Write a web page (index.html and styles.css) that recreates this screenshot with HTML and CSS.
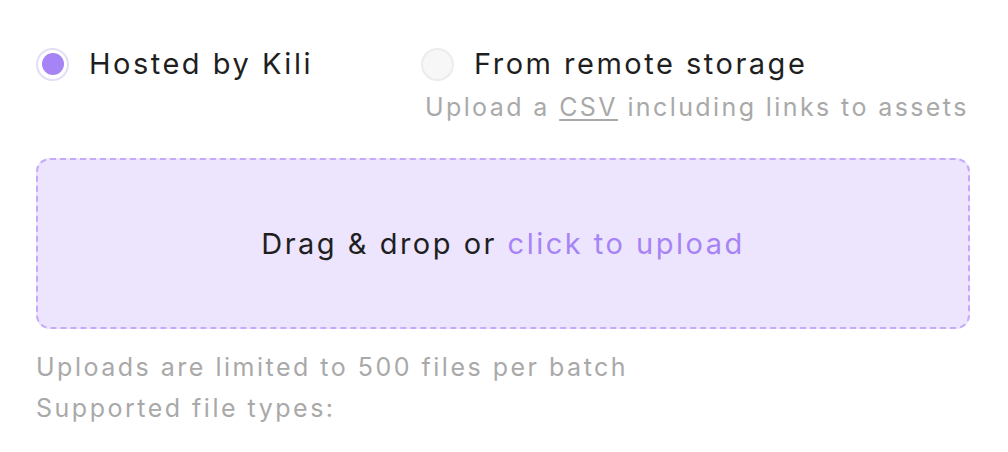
FILE: index.html
```html
<!DOCTYPE html>
<html lang="en">

<head>
    <meta charset="UTF-8" />
    <title>Upload assets</title>
    <link rel="stylesheet" href="styles.css">
</head>

<body>

    <div class="upload-panel">

        <!-- Source choice -->
        <div class="source-options">
            <label class="source-option">
                <span class="radio radio-checked"></span>
                <span class="option-label">Hosted by Kili</span>
            </label>

            <div class="source-column">
                <label class="source-option">
                    <span class="radio"></span>
                    <span class="option-label">From remote storage</span>
                </label>
                <div class="option-hint">Upload a <u>CSV</u> including links to assets</div>
            </div>
        </div>

        <!-- Drop zone -->
        <div class="dropzone">
            <span>Drag &amp; drop or <span class="upload-link">click to upload</span></span>
        </div>

        <!-- Limits -->
        <div class="upload-notes">
            <div>Uploads are limited to 500 files per batch</div>
            <div>Supported file types:</div>
        </div>

    </div>

</body>

</html>
```

FILE: styles.css
```css
body {
    font-family: Inter, "Noto Sans", sans-serif;
    margin: 0;
    background: #fff;
    color: #1f1f1f;
    letter-spacing: 2.5px;
}

.upload-panel {
    width: 934px;
    padding: 46px 0 0 36px;
}

/* Radios */
.source-options {
    display: flex;
    gap: 108px;
    align-items: flex-start;
    white-space: nowrap;
}

.source-option {
    display: flex;
    align-items: center;
    gap: 20px;
}

.radio {
    width: 33px;
    height: 33px;
    border-radius: 50%;
    border: 2px solid #ececec;
    background: #f7f7f7;
    box-sizing: border-box;
    display: inline-block;
    position: relative;
    flex-shrink: 0;
}

.radio-checked {
    border-color: #e4def4;
    background: #fff;
}

.radio-checked::after {
    content: "";
    position: absolute;
    left: 3.5px;
    top: 3.5px;
    width: 22px;
    height: 22px;
    border-radius: 50%;
    background: #a684f5;
}

.option-label {
    font-size: 29px;
    line-height: 36px;
}

.option-hint {
    font-size: 25px;
    line-height: 30px;
    color: #a9a9a9;
    margin-top: 10px;
    padding-left: 4px;
    letter-spacing: 2.4px;
}

.option-hint u {
    text-underline-offset: 3px;
}

/* Drop zone */
.dropzone {
    margin-top: 36px;
    height: 171px;
    box-sizing: border-box;
    border: 2px dashed #c4aaf8;
    border-radius: 14px;
    background: #ede4fd;
    display: flex;
    align-items: center;
    justify-content: center;
    font-size: 29px;
    color: #1f1f1f;
}

.upload-link {
    color: #a684f5;
}

/* Notes */
.upload-notes {
    margin-top: 18px;
    font-size: 25px;
    line-height: 41px;
    color: #a9a9a9;
}
```
